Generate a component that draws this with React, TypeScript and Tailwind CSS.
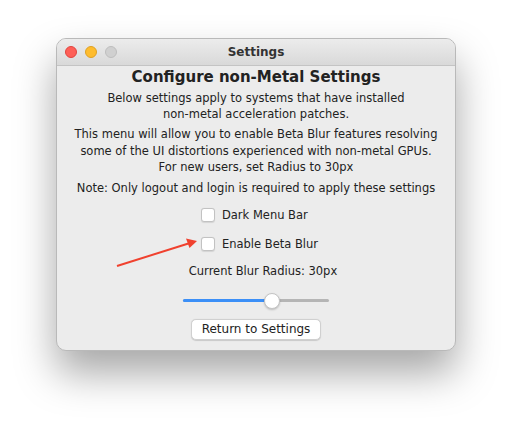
export default function App() {
  return (
    <div className="relative w-[512px] h-[425px] bg-white overflow-hidden" style={{ fontFamily: '"DejaVu Sans", Verdana, sans-serif' }}>
      <div className="absolute left-[56px] top-[38px] w-[400px] h-[313px] rounded-[10px] bg-[#ececec] border border-[#b9b9b9] shadow-[0_22px_40px_rgba(0,0,0,0.35)] overflow-hidden flex flex-col">
        <div className="relative h-[27px] flex items-center justify-center bg-gradient-to-b from-[#ececec] to-[#d9d9d9] border-b border-[#c4c4c4]">
          <div className="absolute left-[8px] top-[7px] flex gap-[8px]">
            <span className="w-[12px] h-[12px] rounded-full bg-[#fe5f57] border border-[#e0443e]" />
            <span className="w-[12px] h-[12px] rounded-full bg-[#febc2e] border border-[#dea123]" />
            <span className="w-[12px] h-[12px] rounded-full bg-[#d0d0d0] border border-[#bdbdbd]" />
          </div>
          <span className="text-[12px] font-bold text-[#333]">Settings</span>
        </div>
        <div className="flex flex-col items-center text-[#222] text-[11.5px] leading-[16px] text-center">
          <h1 className="text-[15px] font-bold leading-[20px] mt-[1px] text-[#222]">Configure non-Metal Settings</h1>
          <p className="mt-[3px]">Below settings apply to systems that have installed<br />non-metal acceleration patches.</p>
          <p className="mt-[4px] leading-[16.5px]">This menu will allow you to enable Beta Blur features resolving<br />some of the UI distortions experienced with non-metal GPUs.<br />For new users, set Radius to 30px</p>
          <p className="mt-[4px]">Note: Only logout and login is required to apply these settings</p>
          <div className="mt-[11px] flex flex-col items-start gap-[13px] ml-[7px]">
            <label className="flex items-center gap-[7px]">
              <span className="w-[14px] h-[14px] rounded-[3px] bg-white border border-[#c2c2c2] shadow-[0_0.5px_1px_rgba(0,0,0,0.1)]" />
              <span>Dark Menu Bar</span>
            </label>
            <label className="flex items-center gap-[7px]">
              <span className="w-[14px] h-[14px] rounded-[3px] bg-white border border-[#c2c2c2] shadow-[0_0.5px_1px_rgba(0,0,0,0.1)]" />
              <span>Enable Beta Blur</span>
            </label>
          </div>
          <p className="mt-[11px] ml-[14px]">Current Blur Radius: 30px</p>
          <div className="relative mt-[14px] w-[146px] h-[16px] flex items-center">
            <div className="w-full h-[3px] rounded-full bg-[#b5b5b5]" />
            <div className="absolute left-0 w-[89px] h-[3px] rounded-full bg-[#3b8ff7]" />
            <div className="absolute left-[81px] w-[16px] h-[16px] rounded-full bg-white border border-[#c4c4c4] shadow-[0_1px_2px_rgba(0,0,0,0.2)]" />
          </div>
          <button className="mt-[10px] h-[21px] px-[10px] rounded-[5px] bg-white border border-[#d0d0d0] shadow-[0_0.5px_1px_rgba(0,0,0,0.15)] text-[12px] text-[#222] leading-none">Return to Settings</button>
        </div>
      </div>
      <svg className="absolute left-0 top-0" width="512" height="425">
        <line x1="117" y1="266" x2="190" y2="243" stroke="#f0412e" strokeWidth="2" />
        <polygon points="197,241 186,238.5 189.5,248" fill="#f0412e" />
      </svg>
    </div>
  );
}
